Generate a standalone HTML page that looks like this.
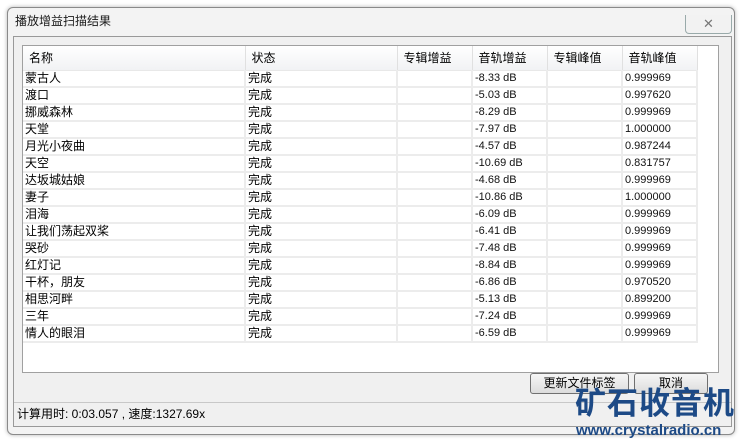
<!DOCTYPE html>
<html><head><meta charset="utf-8"><style>
body{margin:0;width:740px;height:442px;background:#fff;position:relative;overflow:hidden;font-family:"Liberation Sans","Noto Sans CJK SC",sans-serif;font-size:12px;color:#000}
.win{position:absolute;left:7px;top:7px;width:726px;height:426px;border:1px solid #8a8a8a;border-radius:6px;background:#f3f3f3;box-shadow:0 0 4px rgba(0,0,0,.3)}
.title{position:absolute;left:15px;top:12px;font-size:12px;color:#1a1a1a}
.close{position:absolute;left:677px;top:7px;width:45px;height:18px;border:1px solid #9aa;border-top:none;border-radius:0 0 4px 4px;background:#f2f2f2;color:#777;text-align:center;font-size:13px;line-height:18px}
.client{position:absolute;left:13px;top:36px;width:717px;height:389px;background:#f0f0f0;border:1px solid #999}
.list{position:absolute;left:8px;top:8px;width:695px;height:326px;background:#fff;border:1px solid #a0a0a0;overflow:hidden}
table{position:absolute;left:0;top:0;border-collapse:collapse;table-layout:fixed}
th{height:24px;font-weight:normal;text-align:left;padding:0 0 0 6px;background:linear-gradient(#fff,#f1f2f4);border-right:1px solid #e0e0e0;border-bottom:1px solid #e8e8e8;font-size:12px;box-sizing:border-box}
td{height:15px;padding:0 0 0 2px;font-size:12px;line-height:15px;white-space:nowrap;border-bottom:2px solid #ececec;border-right:2px solid #ececec;overflow:hidden}
td.n{font-size:11px;color:#111}
.btn{position:absolute;height:19px;border:1px solid #707070;border-radius:3px;background:linear-gradient(#f6f6f6,#dcdcdc);text-align:center;line-height:19px}
.status{position:absolute;left:0;top:365px;width:714px;height:22px;background:#f0f0f0;border-top:1px solid #c8c8c8;line-height:22px;padding-left:3px;font-size:12px}
.logo{position:absolute;left:575px;top:380px;font-size:31px;font-weight:bold;color:#1d4a86;line-height:42px;white-space:nowrap;letter-spacing:1px;font-family:"Noto Sans CJK SC",sans-serif}
.url{position:absolute;left:576px;top:423px;font-size:15px;font-weight:bold;color:#1d4a86;line-height:16px;white-space:nowrap}
</style></head><body>
<div class="win">
<div class="close">✕</div>
</div>
<div class="title">播放增益扫描结果</div>
<div class="client">
<div class="list">
<table>
<colgroup><col style="width:222px"><col style="width:152px"><col style="width:75px"><col style="width:75px"><col style="width:75px"><col style="width:75px"></colgroup>
<tr><th>名称</th><th>状态</th><th>专辑增益</th><th>音轨增益</th><th>专辑峰值</th><th>音轨峰值</th></tr>
<tr><td>蒙古人</td><td>完成</td><td></td><td class="n">-8.33 dB</td><td></td><td class="n">0.999969</td></tr>
<tr><td>渡口</td><td>完成</td><td></td><td class="n">-5.03 dB</td><td></td><td class="n">0.997620</td></tr>
<tr><td>挪威森林</td><td>完成</td><td></td><td class="n">-8.29 dB</td><td></td><td class="n">0.999969</td></tr>
<tr><td>天堂</td><td>完成</td><td></td><td class="n">-7.97 dB</td><td></td><td class="n">1.000000</td></tr>
<tr><td>月光小夜曲</td><td>完成</td><td></td><td class="n">-4.57 dB</td><td></td><td class="n">0.987244</td></tr>
<tr><td>天空</td><td>完成</td><td></td><td class="n">-10.69 dB</td><td></td><td class="n">0.831757</td></tr>
<tr><td>达坂城姑娘</td><td>完成</td><td></td><td class="n">-4.68 dB</td><td></td><td class="n">0.999969</td></tr>
<tr><td>妻子</td><td>完成</td><td></td><td class="n">-10.86 dB</td><td></td><td class="n">1.000000</td></tr>
<tr><td>泪海</td><td>完成</td><td></td><td class="n">-6.09 dB</td><td></td><td class="n">0.999969</td></tr>
<tr><td>让我们荡起双桨</td><td>完成</td><td></td><td class="n">-6.41 dB</td><td></td><td class="n">0.999969</td></tr>
<tr><td>哭砂</td><td>完成</td><td></td><td class="n">-7.48 dB</td><td></td><td class="n">0.999969</td></tr>
<tr><td>红灯记</td><td>完成</td><td></td><td class="n">-8.84 dB</td><td></td><td class="n">0.999969</td></tr>
<tr><td>干杯，朋友</td><td>完成</td><td></td><td class="n">-6.86 dB</td><td></td><td class="n">0.970520</td></tr>
<tr><td>相思河畔</td><td>完成</td><td></td><td class="n">-5.13 dB</td><td></td><td class="n">0.899200</td></tr>
<tr><td>三年</td><td>完成</td><td></td><td class="n">-7.24 dB</td><td></td><td class="n">0.999969</td></tr>
<tr><td>情人的眼泪</td><td>完成</td><td></td><td class="n">-6.59 dB</td><td></td><td class="n">0.999969</td></tr>
</table>
</div>
<div class="btn" style="left:516px;top:336px;width:97px">更新文件标签</div>
<div class="btn" style="left:620px;top:336px;width:72px">取消</div>
<div class="status">计算用时: 0:03.057 , 速度:1327.69x</div>
</div>
<div class="logo">矿石收音机</div>
<div class="url">www.crystalradio.cn</div>
</body></html>
